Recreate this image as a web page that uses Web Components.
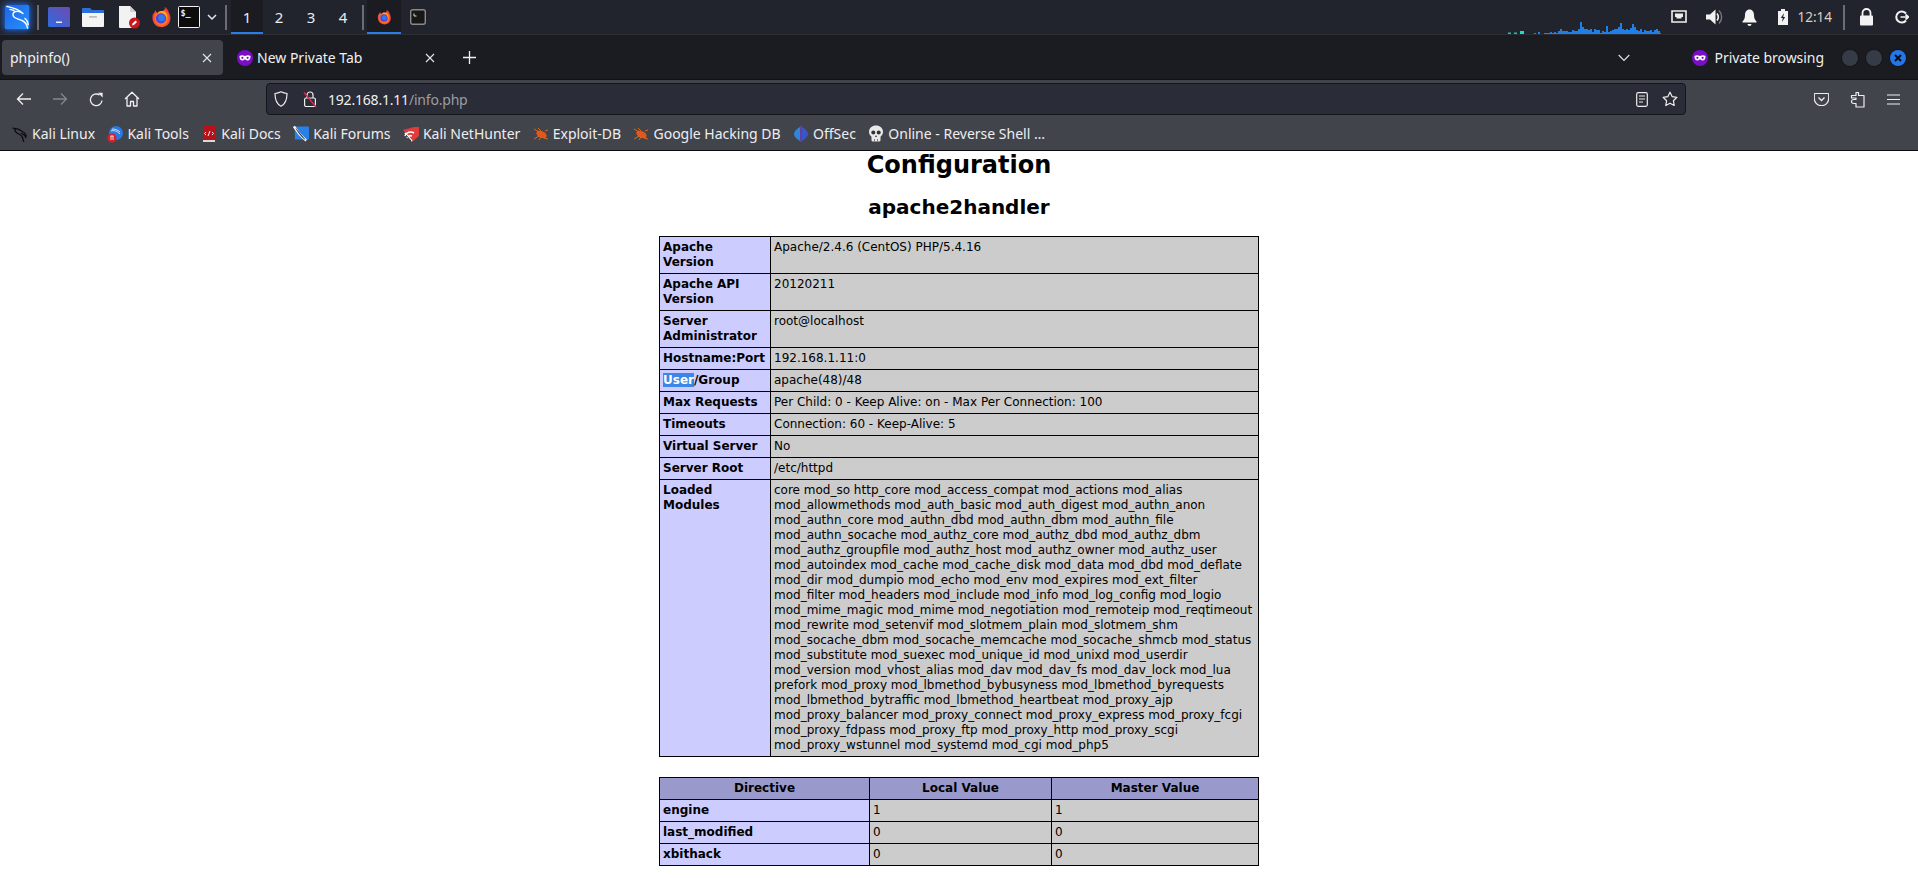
<!DOCTYPE html>
<html lang="en"><head><meta charset="utf-8"><title>phpinfo()</title>
<style>
html,body{margin:0;padding:0;height:878px;overflow:hidden;background:#fff}
body{display:flex;flex-direction:column;font-family:"Noto Sans",sans-serif}
</style></head><body>
<kali-panel></kali-panel>
<ff-tabstrip></ff-tabstrip>
<ff-navbar></ff-navbar>
<ff-bookmarks></ff-bookmarks>
<php-page></php-page>
<script>
const FF=`<defs><radialGradient id="ffb" cx=".5" cy=".55" r=".55"><stop offset="0" stop-color="#ffd23c"/><stop offset=".55" stop-color="#ff7a20"/><stop offset="1" stop-color="#e5263f"/></radialGradient></defs>
<path d="M3 9C2 14 3 19 7 21.500C11 24 17 23.500 20 20C23 16.500 23 11 20.500 7C20 4 18 2 16 1C16.500 3.500 15.500 5 13.500 5.500C11 5.500 9 6 8.500 7.500C7 7.500 6.500 6 6.500 4.500C5 5.500 4.500 7 4.300 8.300C3.800 8 3.400 8 3 9Z" fill="url(#ffb)"/>
<circle cx="12" cy="13.500" r="5.600" fill="#5b3fd6"/><circle cx="12.500" cy="13" r="3.600" fill="#2f7be8"/>
<path d="M8 8C10 6.500 13 6.500 15 8C17 9.500 18.500 12 18 15C19.500 11 17.500 6.500 14 5.500C11.500 5 9 6 8 8Z" fill="#ffb020"/>`;
const ICONS={
kali:[26,26,`<defs><linearGradient id="kb" x1="0" y1="0" x2="1" y2="1"><stop offset="0" stop-color="#1a66ec"/><stop offset="1" stop-color="#2a90fa"/></linearGradient></defs>
<rect x=".5" y=".5" width="25" height="25" rx="2.500" fill="url(#kb)"/>
<path d="M3 2.500C8 3.500 14 4.500 19 9.500M19 9.500C14 6 8.500 7 9 11C9.500 15 14.500 14.500 18 16.500C21 18 23 20 23.500 24M21 14.500C23 16 24 18 24.200 20.500M6 5.500C7.500 5.800 9 6 10 6.500" fill="none" stroke="#fff" stroke-width="1.400" stroke-linecap="round"/>`],
screen:[22,22,`<defs><linearGradient id="sb" x1="0" y1="1" x2="1" y2="0"><stop offset="0" stop-color="#2e6ce0"/><stop offset="1" stop-color="#6d4bb0"/></linearGradient></defs>
<rect x="0" y="1" width="22" height="20" rx="1.500" fill="url(#sb)"/><rect x="8" y="15.500" width="6" height="1.500" fill="#e8ecff"/>`],
folder:[22,22,`<path d="M0 3a1 1 0 0 1 1-1h7l2 2h11a1 1 0 0 1 1 1v3H0Z" fill="#2a6fdc"/><path d="M0 7h22v13a1 1 0 0 1-1 1H1a1 1 0 0 1-1-1Z" fill="#f4f4f4"/><rect x="7" y="10" width="8" height="1.800" rx=".5" fill="#bdbdbd"/>`],
doc:[22,24,`<path d="M1 1h11l6 6v15a1 1 0 0 1-1 1H2a1 1 0 0 1-1-1Z" fill="#f2f2f2"/><path d="M12 1l6 6h-6Z" fill="#cfcfcf"/><circle cx="16.500" cy="18" r="5.500" fill="#c8171d"/><path d="M14 20.500l.5-2 3-3 1.500 1.500-3 3Z" fill="#fff"/>`],
firefox:[24,24,FF],
term:[22,22,`<rect x=".5" y=".5" width="21" height="21" rx="1" fill="#0c0c0c" stroke="#f2f2f2"/><text x="2.500" y="10" font-family="'DejaVu Sans Mono',monospace" font-size="8.500" font-weight="bold" fill="#eee">$_</text>`],
term2:[16,16,`<rect x=".7" y=".7" width="14.600" height="14.600" rx="2" fill="#171717" stroke="#8a8a8a" stroke-width="1.400"/><path d="M4 4.500v2.500h2.500" stroke="#ddd" fill="none"/>`],
chev:[10,7,`<path d="M1 1l4 4 4-4" fill="none" stroke="#e6e6e6" stroke-width="1.500"/>`],
chev2:[12,8,`<path d="M.7 1l5.300 5.500L11.300 1" fill="none" stroke="#e4e4e4" stroke-width="1.100"/>`],
net:[16,14,`<path d="M1 1h14v11H1Z" fill="none" stroke="#eee" stroke-width="1.600"/><path d="M4 3.500h8v3.500h-1.500v1.500h-5V7H4Z" fill="#eee"/>`],
speaker:[17,18,`<path d="M0 6.500h4L9.500 1.500v15L4 11.500H0Z" fill="#f2f2f2"/><path d="M11 5.500c1.500 2 1.500 5 0 7" fill="none" stroke="#f2f2f2" stroke-width="1.600"/><path d="M13 2.500c3.500 3.500 3.500 9.500 0 13" fill="none" stroke="#77797f" stroke-width="1.400"/>`],
bell:[15,17,`<path d="M7.500 0.500c3 0 4.500 2.500 4.500 5.500 0 3.500 1 5 2.500 6.500v1H.5v-1C2 11 3 9.500 3 6c0-3 1.500-5.500 4.500-5.500Z" fill="#f4f4f4"/><path d="M5.500 15h4a2 2 0 0 1-4 0Z" fill="#f4f4f4"/>`],
battery:[10,16,`<path d="M3 0h4v2h3v14H0V2h3Z" fill="#f2f2f2"/><path d="M6 4L2.800 9h2L4 13l3.200-5h-2Z" fill="#22242c"/>`],
lock:[15,18,`<path d="M3.500 8V5a4 4 0 0 1 8 0v3" fill="none" stroke="#f2f2f2" stroke-width="1.800"/><rect x="1" y="7.500" width="13" height="10" rx="1" fill="#f2f2f2"/>`],
logout:[14,14,`<path d="M11 3.500A5.500 5.500 0 1 0 11 10.500" fill="none" stroke="#f2f2f2" stroke-width="2"/><path d="M5.500 7h8M10.500 4.500L13.500 7l-3 2.500" fill="none" stroke="#f2f2f2" stroke-width="1.700"/>`],
close:[10,10,`<path d="M1 1l8 8M9 1l-8 8" stroke="#e6e6e6" stroke-width="1.100"/>`],
plus:[13,13,`<path d="M6.500 0v13M0 6.500h13" stroke="#f0f0f0" stroke-width="1.300"/>`],
mask:[16,16,`<circle cx="8" cy="8" r="8" fill="#7a0ec4"/><path d="M2.500 6c2-1 3.500-.7 5.500 0 2-.7 3.500-1 5.500 0 .2 2.500-.8 4.500-3 4.500-1.500 0-1.800-1.300-2.500-1.300s-1 1.300-2.500 1.300c-2.200 0-3.200-2-3-4.500Z" fill="#fff"/><circle cx="5.400" cy="7.800" r="1.100" fill="#7a0ec4"/><circle cx="10.600" cy="7.800" r="1.100" fill="#7a0ec4"/>`],
back:[16,14,`<path d="M15 7H1.500M7 1.500L1.500 7 7 12.500" fill="none" stroke="#f0f0f0" stroke-width="1.300"/>`],
fwd:[16,14,`<path d="M1 7h13.500M9 1.500L14.500 7 9 12.500" fill="none" stroke="#85868b" stroke-width="1.300"/>`],
reload:[15,15,`<path d="M13 8.500A5.800 5.800 0 1 1 10.500 3" fill="none" stroke="#f0f0f0" stroke-width="1.300"/><path d="M9 .8h4.600v4.600Z" fill="#f0f0f0"/>`],
home:[16,16,`<path d="M1 8L8 1.200 15 8M3 6.500V15h3.500v-4.500h3V15H13V6.500" fill="none" stroke="#f0f0f0" stroke-width="1.300" stroke-linejoin="round"/>`],
shield:[14,16,`<path d="M7 .8c2 1 4 1.500 6 1.700 0 6-1.500 10.500-6 12.700C2.500 13 1 8.500 1 2.500 3 2.300 5 1.800 7 .8Z" fill="none" stroke="#eee" stroke-width="1.200"/>`],
lockx:[14,18,`<path d="M4 8V5a3 3 0 0 1 6 0v3" fill="none" stroke="#eee" stroke-width="1.200"/><rect x="1.600" y="8" width="10.800" height="8.500" rx="1.500" fill="none" stroke="#eee" stroke-width="1.200"/><path d="M1 2.500L13 17" stroke="#e22850" stroke-width="1.400"/>`],
reader:[12,15,`<rect x=".7" y=".7" width="10.600" height="13.600" rx="1.500" fill="none" stroke="#eee" stroke-width="1.200"/><path d="M3 4h6M3 7h6M3 10h4" stroke="#eee" stroke-width="1.100"/>`],
star:[16,16,`<path d="M8 1.200l2.100 4.400 4.800.7-3.500 3.400.8 4.800L8 12.200l-4.200 2.300.8-4.800L1.100 6.300l4.800-.7Z" fill="none" stroke="#eee" stroke-width="1.200" stroke-linejoin="round"/>`],
pocket:[15,14,`<path d="M1 1.500h13a.7.7 0 0 1 .7.7V6.500A7.200 7.200 0 0 1 .3 6.500V2.200a.7.7 0 0 1 .7-.7Z" fill="none" stroke="#eee" stroke-width="1.200"/><path d="M4.500 5.500L7.500 8.500l3-3" fill="none" stroke="#eee" stroke-width="1.300"/>`],
ext:[15,17,`<path d="M6 1.500h2.500v3H14V16H6V12.500H3.500a2 2 0 0 1 0-4H6V7H1.500V4.500H6Z" fill="none" stroke="#eee" stroke-width="1.200" stroke-linejoin="round"/>`],
menu:[13,11,`<path d="M0 1h13M0 5.500h13M0 10h13" stroke="#eee" stroke-width="1.200"/>`],
b_kali:[16,16,`<path d="M.5 2c3 1 6 0 8 2.500 2.500 1 5 3 6 6M3 3c-.5 2 .5 3 2 4 2.500 1.500 5 2 5.500 4.500.3 1.500.5 3 1.500 4.500M9 7c2 1 4 2 5 5" fill="none" stroke="#0a0a0a" stroke-width="1.300"/>`],
b_tools:[16,18,`<circle cx="9" cy="8" r="7" fill="#2a78e0"/><path d="M4 6c3-1 6 0 9 3M5 4c3 0 6 1 8 3" stroke="#cfe4ff" fill="none"/><circle cx="5" cy="13" r="4.500" fill="#d2232a"/><path d="M3.500 11h3M4 11v4M6 11v4" stroke="#fff" stroke-width=".8"/>`],
b_docs:[14,16,`<rect x="1" y="0" width="12" height="15" rx="1" fill="#b5121b"/><rect x="1" y="14" width="12" height="2" fill="#d9d9d9"/><path d="M4 6l-1.500 1.500L4 9M10 6l1.500 1.500L10 9M8 5L6 10" stroke="#fff" stroke-width=".9" fill="none"/>`],
b_forums:[17,17,`<rect x="2" y="1" width="15" height="14" rx="1" fill="#2b80e6"/><path d="M1 1c3 5 7 10 13 15" stroke="#fff" stroke-width="2.500"/><path d="M3 3c3 5 6 9 10 12" stroke="#222" stroke-width=".7"/>`],
b_hunter:[16,16,`<path d="M0 4L11 1l5 0v9L9 16Z" fill="#e23b3b"/><path d="M2 10a6 6 0 0 1 9-3M4 12a4 4 0 0 1 5-2M2 7l7 8" fill="none" stroke="#fff" stroke-width="1.600"/><path d="M3 9l5 6" stroke="#222" stroke-width=".9"/>`],
b_exploit:[16,14,`<ellipse cx="8.500" cy="7.500" rx="5.500" ry="3.300" transform="rotate(25 8.500 7.500)" fill="#e4571b"/><path d="M1 2l5 3M5 1l3 3M1 12l5-3M6 13l2-3M11 11l4 1M12 4l3-1" stroke="#e4701b" stroke-width=".9"/>`],
b_offsec:[14,16,`<path d="M6 1C2 3 0 6 0 8s2 5 6 7Z" fill="#2f86d8"/><path d="M8 1c4 2 6 5 6 7s-2 5-6 7Z" fill="#3a55c8"/><rect x="6.400" y="0" width="1.200" height="16" fill="#7a3bd0"/>`],
b_skull:[16,17,`<path d="M8 .5c4 0 7 2.500 7 6.300 0 2.500-1.200 4-2.500 4.900V15a1.500 1.500 0 0 1-1.500 1.500H5A1.500 1.500 0 0 1 3.500 15v-3.300C2.200 10.800 1 9.300 1 6.800 1 3 4 .5 8 .5Z" fill="#e8e8e8"/><circle cx="5.300" cy="7.500" r="2" fill="#333"/><circle cx="10.700" cy="7.500" r="2" fill="#333"/><path d="M8 10l-1 2h2Z" fill="#333"/><path d="M6.500 14v2.500M9.500 14v2.500" stroke="#555" stroke-width=".7"/>`]
};
class XIcon extends HTMLElement{
  connectedCallback(){
    const [w,h,body]=ICONS[this.getAttribute('name')];
    const s=this.getAttribute('size');
    const dw=s||w, dh=s||h;
    const r=this.attachShadow({mode:'open'});
    r.innerHTML=`<style>:host{display:inline-flex;flex:none;align-items:center;justify-content:center}svg{display:block}</style>
    <svg xmlns="http://www.w3.org/2000/svg" width="${dw}" height="${dh}" viewBox="0 0 ${w} ${h}">${body}</svg>`;
  }
}
customElements.define('x-icon',XIcon);
const UI='font-family:"Noto Sans",sans-serif;';

class KaliPanel extends HTMLElement{
  constructor(){super();
    const heights=[1,0,2,0,0,1,1,1,2,1,2,1,3,5,3,3,3,2,2,4,3,3,5,12,7,5,5,4,5,2,5,4,4,1,3,2,8,2,3,4,5,5,7,11,5,4,5,4,6,10,7,4,3,5,2,4,3,3,4,2,4,5,3,1];
    let x=26,bars='';
    for(const h of heights){ if(h) bars+=`<rect x="${x}" y="${12-h}" width="2" height="${h}" fill="#1f7fe8"/>`; x+=2;}
    this.attachShadow({mode:'open'}).innerHTML=`<style>
    :host{display:flex;flex:none;height:34px;align-items:center;background:#22242d;border-bottom:1px solid #2c2e33;${UI}color:#dfe7ee;position:relative}
    .kali{margin-left:4px;border-radius:3px;box-shadow:0 0 6px #1d6cf0}
    .sep{flex:none;width:2px;height:25px;background:#6b6d72}
    .ws{flex:none;width:32px;height:34px;display:flex;align-items:center;justify-content:center;font-size:15px;box-sizing:border-box;color:#e3eef8}
    .on{background:#1a1c22;box-shadow:inset 0 -2px #2a7de8}
    .win{flex:none;width:34px;height:34px;display:flex;align-items:center;justify-content:center}
    .graph{margin-left:auto;flex:none;display:block;align-self:flex-end}
    .clock{margin-left:9px;font-size:13.500px;color:#d9cfc2}
    svg{display:block}
    </style>
    <x-icon class="kali" name="kali"></x-icon><div class="sep" style="margin-left:7px"></div>
    <x-icon name="screen" style="margin-left:9px"></x-icon>
    <x-icon name="folder" style="margin-left:12px"></x-icon>
    <x-icon name="doc" style="margin-left:14px"></x-icon>
    <x-icon name="firefox" size="22" style="margin-left:10px"></x-icon>
    <x-icon name="term" style="margin-left:6px"></x-icon>
    <x-icon name="chev" style="margin-left:7px"></x-icon>
    <div class="sep" style="margin-left:8px"></div>
    <div class="ws on" style="margin-left:4px">1</div><div class="ws">2</div><div class="ws">3</div><div class="ws">4</div>
    <div class="sep" style="margin-left:3px"></div>
    <div class="win on" style="margin-left:3px"><x-icon name="firefox" size="16"></x-icon></div>
    <div class="win"><x-icon name="term2"></x-icon></div>
    <svg class="graph" width="153" height="12" viewBox="0 0 153 12"><rect x="0" y="10.500" width="3" height="1.500" fill="#17c8b0"/><rect x="6" y="10.500" width="3" height="1.500" fill="#17c8b0"/><rect x="12" y="9" width="4" height="3" fill="#17e0c0"/>${bars}</svg>
    <x-icon name="net" style="margin-left:10px"></x-icon>
    <x-icon name="speaker" style="margin-left:19px"></x-icon>
    <x-icon name="bell" style="margin-left:19px"></x-icon>
    <x-icon name="battery" style="margin-left:21px"></x-icon>
    <span class="clock">12:14</span>
    <div class="sep" style="margin-left:11px"></div>
    <x-icon name="lock" style="margin-left:14px"></x-icon>
    <x-icon name="logout" style="margin-left:21px;margin-right:9px"></x-icon>`;
  }
}
customElements.define('kali-panel',KaliPanel);

class FfTab extends HTMLElement{
  constructor(){super();
    this.attachShadow({mode:'open'}).innerHTML=`<style>
    :host{display:flex;flex:none;align-items:center;box-sizing:border-box;width:221px;height:35px;padding:0 11px 0 8px;border-radius:4px;color:#f0f0f2;font-size:14px}
    :host([active]){background:#42444c}
    .t{flex:1;white-space:nowrap;margin-left:var(--gap,0)}
    </style><slot name="icon"></slot><span class="t"><slot></slot></span><x-icon name="close"></x-icon>`;
  }
}
customElements.define('ff-tab',FfTab);

class FfTabstrip extends HTMLElement{
  constructor(){super();
    this.attachShadow({mode:'open'}).innerHTML=`<style>
    :host{display:flex;flex:none;height:44px;align-items:center;box-sizing:border-box;padding:1px 0 0 2px;background:#1b1c21;color:#eee;${UI}font-size:14px}
    .dot{flex:none;width:16px;height:16px;border-radius:50%;background:#363b48;box-shadow:0 0 0 1px #15161a;display:flex;align-items:center;justify-content:center}
    .x{background:#2377e8}
    .x svg{display:block}
    </style>
    <ff-tab active>phpinfo()</ff-tab>
    <ff-tab style="margin-left:2px;--gap:4px;padding-left:12px"><x-icon slot="icon" name="mask"></x-icon>New Private Tab</ff-tab>
    <x-icon name="plus" style="margin-left:17px"></x-icon>
    <x-icon name="chev2" style="margin-left:auto"></x-icon>
    <x-icon name="mask" style="margin-left:62px"></x-icon>
    <span style="margin-left:6px;white-space:nowrap;letter-spacing:-.05px">Private browsing</span>
    <div class="dot" style="margin-left:18px"></div><div class="dot" style="margin-left:8px"></div>
    <div class="dot x" style="margin:0 12px 0 8px"><svg width="10" height="10" viewBox="0 0 10 10"><path d="M2 2l6 6M8 2l-6 6" stroke="#0a0f18" stroke-width="2"/></svg></div>`;
  }
}
customElements.define('ff-tabstrip',FfTabstrip);

class FfNavbar extends HTMLElement{
  constructor(){super();
    this.attachShadow({mode:'open'}).innerHTML=`<style>
    :host{display:flex;flex:none;height:36px;align-items:center;box-sizing:border-box;padding-top:3px;background:#42444c;border-top:1px solid #111216;${UI}color:#f0f0f2}
    .url{flex:none;width:1420px;height:32px;box-sizing:border-box;align-self:flex-end;display:flex;align-items:center;background:#2a2c37;border:1px solid #15161a;border-radius:4px;font-size:14px;letter-spacing:-.2px}
    .dim{color:#9c9da3}
    .host{margin-left:11px;white-space:nowrap}
    </style>
    <x-icon name="back" style="margin-left:16px"></x-icon>
    <x-icon name="fwd" style="margin-left:20px"></x-icon>
    <x-icon name="reload" style="margin-left:21px"></x-icon>
    <x-icon name="home" style="margin-left:20px"></x-icon>
    <div class="url" style="margin-left:126px">
      <x-icon name="shield" style="margin-left:7px"></x-icon>
      <x-icon name="lockx" style="margin-left:15px"></x-icon>
      <span class="host">192.168.1.11<span class="dim">/info.php</span></span>
      <x-icon name="reader" style="margin-left:auto"></x-icon>
      <x-icon name="star" style="margin:0 7px 0 14px"></x-icon>
    </div>
    <x-icon name="pocket" style="margin-left:128px"></x-icon>
    <x-icon name="ext" style="margin-left:21px"></x-icon>
    <x-icon name="menu" style="margin-left:22px"></x-icon>`;
  }
}
customElements.define('ff-navbar',FfNavbar);

class FfBookmark extends HTMLElement{
  constructor(){super();
    const n=this.getAttribute('icon');
    this.attachShadow({mode:'open'}).innerHTML=`<style>
    :host{display:flex;flex:none;align-items:center;height:33px;white-space:nowrap}
    x-icon{width:16px;margin-right:4px}
    </style><x-icon name="${n}"></x-icon><slot></slot>`;
  }
}
customElements.define('ff-bookmark',FfBookmark);

class FfBookmarks extends HTMLElement{
  constructor(){super();
    this.attachShadow({mode:'open'}).innerHTML=`<style>
    :host{display:flex;flex:none;height:36px;box-sizing:border-box;padding-left:12px;padding-top:2px;gap:12.400px;align-items:center;background:#42444c;border-bottom:1px solid #0c0c0f;color:#eeeef0;${UI}font-size:14px}
    </style>
    <ff-bookmark icon="b_kali">Kali Linux</ff-bookmark>
    <ff-bookmark icon="b_tools">Kali Tools</ff-bookmark>
    <ff-bookmark icon="b_docs">Kali Docs</ff-bookmark>
    <ff-bookmark icon="b_forums">Kali Forums</ff-bookmark>
    <ff-bookmark icon="b_hunter">Kali NetHunter</ff-bookmark>
    <ff-bookmark icon="b_exploit">Exploit-DB</ff-bookmark>
    <ff-bookmark icon="b_exploit">Google Hacking DB</ff-bookmark>
    <ff-bookmark icon="b_offsec">OffSec</ff-bookmark>
    <ff-bookmark icon="b_skull">Online - Reverse Shell …</ff-bookmark>`;
  }
}
customElements.define('ff-bookmarks',FfBookmarks);

const TSTYLE=`table{border-collapse:collapse;table-layout:fixed;width:599px;margin:0 auto;font:12px/15px "DejaVu Sans",sans-serif;color:#000;text-align:left}
td,th{border:1px solid #000;padding:3px;vertical-align:top;overflow:visible}
.e{background:#ccf;font-weight:bold}.v{background:#ccc}
th{background:#99c;font-weight:bold;text-align:center}
.sel{background:#3b86e6;color:#fff}`;

class PhpInfoTable extends HTMLElement{
  set data(d){
    const r=this.shadowRoot||this.attachShadow({mode:'open'});
    const cols=d.cols.map(w=>`<col style="width:${w}px">`).join('');
    const head=d.head?`<tr>${d.head.map(h=>`<th>${h}</th>`).join('')}</tr>`:'';
    const rows=d.rows.map(c=>`<tr><td class="e">${c[0]}</td>${c.slice(1).map(v=>`<td class="v">${v}</td>`).join('')}</tr>`).join('');
    r.innerHTML=`<style>:host{display:block}${TSTYLE}</style><table><colgroup>${cols}</colgroup>${head}${rows}</table>`;
  }
}
customElements.define('php-info-table',PhpInfoTable);

class PhpPage extends HTMLElement{
  constructor(){super();
    const r=this.attachShadow({mode:'open'});
    r.innerHTML=`<style>
    :host{display:block;flex:1;min-height:0;overflow:hidden;background:#fff;font-family:"DejaVu Sans",sans-serif;color:#000;text-align:center}
    h1{font-size:24px;line-height:28px;margin:0}
    h2{font-size:20px;line-height:23px;margin:17px 0 17px}
    .gap{height:20px}
    </style><h1>Configuration</h1><h2>apache2handler</h2>
    <php-info-table id="a"></php-info-table><div class="gap"></div><php-info-table id="b"></php-info-table>`;
    r.getElementById('a').data={cols:[111,488],rows:[
      ['Apache Version','Apache/2.4.6 (CentOS) PHP/5.4.16'],
      ['Apache API Version','20120211'],
      ['Server Administrator','root@localhost'],
      ['Hostname:Port','192.168.1.11:0'],
      ['<span class="sel">User</span>/Group','apache(48)/48'],
      ['Max Requests','Per Child: 0 - Keep Alive: on - Max Per Connection: 100'],
      ['Timeouts','Connection: 60 - Keep-Alive: 5'],
      ['Virtual Server','No'],
      ['Server Root','/etc/httpd'],
      ['Loaded Modules','core mod_so http_core mod_access_compat mod_actions mod_alias mod_allowmethods mod_auth_basic mod_auth_digest mod_authn_anon mod_authn_core mod_authn_dbd mod_authn_dbm mod_authn_file mod_authn_socache mod_authz_core mod_authz_dbd mod_authz_dbm mod_authz_groupfile mod_authz_host mod_authz_owner mod_authz_user mod_autoindex mod_cache mod_cache_disk mod_data mod_dbd mod_deflate mod_dir mod_dumpio mod_echo mod_env mod_expires mod_ext_filter mod_filter mod_headers mod_include mod_info mod_log_config mod_logio mod_mime_magic mod_mime mod_negotiation mod_remoteip mod_reqtimeout mod_rewrite mod_setenvif mod_slotmem_plain mod_slotmem_shm mod_socache_dbm mod_socache_memcache mod_socache_shmcb mod_status mod_substitute mod_suexec mod_unique_id mod_unixd mod_userdir mod_version mod_vhost_alias mod_dav mod_dav_fs mod_dav_lock mod_lua prefork mod_proxy mod_lbmethod_bybusyness mod_lbmethod_byrequests mod_lbmethod_bytraffic mod_lbmethod_heartbeat mod_proxy_ajp mod_proxy_balancer mod_proxy_connect mod_proxy_express mod_proxy_fcgi mod_proxy_fdpass mod_proxy_ftp mod_proxy_http mod_proxy_scgi mod_proxy_wstunnel mod_systemd mod_cgi mod_php5']
    ]};
    r.getElementById('b').data={cols:[210,182,207],head:['Directive','Local Value','Master Value'],rows:[['engine','1','1'],['last_modified','0','0'],['xbithack','0','0']]};
  }
}
customElements.define('php-page',PhpPage);
</script>
</body></html>
